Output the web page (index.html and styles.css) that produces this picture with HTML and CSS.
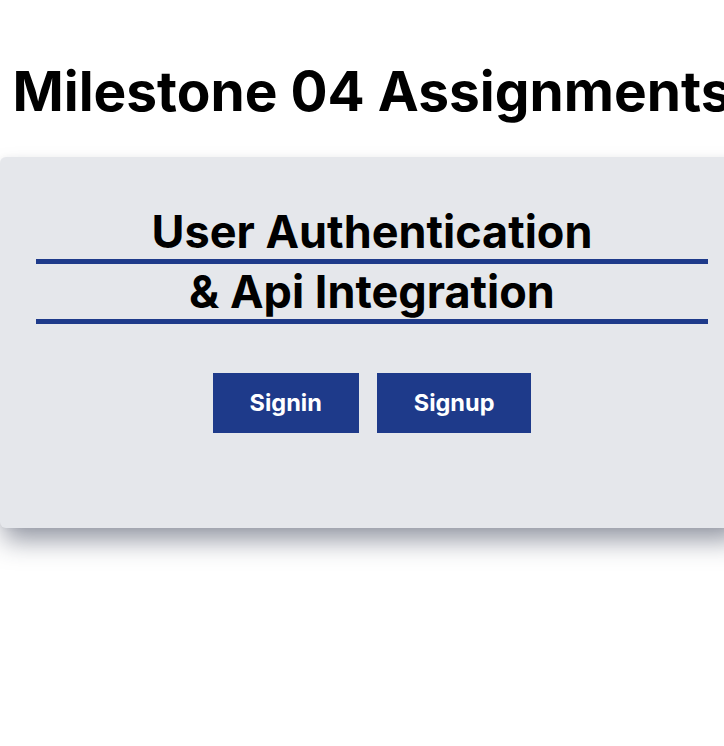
FILE: index.html
```html
<!DOCTYPE html>
<html lang="en">
<head>
<meta charset="utf-8">
<title>Milestone 04 Assignments</title>
<link rel="stylesheet" href="styles.css">
</head>
<body>
<main class="page">
  <h1 class="page-title">Milestone 04 Assignments</h1>
  <section class="card">
    <h2 class="card-title">
      <span class="card-title-line">User Authentication</span>
      <span class="card-title-line">&amp; Api Integration</span>
    </h2>
    <div class="actions">
      <button class="btn btn-signin" type="button">Signin</button>
      <button class="btn btn-signup" type="button">Signup</button>
    </div>
  </section>
</main>
</body>
</html>
```

FILE: styles.css
```css
* {
  box-sizing: border-box;
}

html {
  overflow: hidden;
}

html, body {
  margin: 0;
  padding: 0;
  background: #ffffff;
}

body {
  font-family: Inter, "Noto Sans", sans-serif;
  color: #000000;
}

.page {
  width: 744px;
  padding-top: 58px;
  padding-bottom: 80px;
}

.page-title {
  margin: 0;
  text-align: center;
  font-size: 55px;
  line-height: 66px;
  font-weight: 700;
  white-space: nowrap;
}

.card {
  margin-top: 33px;
  width: 744px;
  background: #e5e7eb;
  border-radius: 6px;
  padding: 47px 36px 95px;
  box-shadow: 0 16px 26px -4px rgba(40, 48, 72, 0.5), 0 0 6px rgba(0, 0, 0, 0.04);
}

.card-title {
  margin: 0;
  font-size: 45px;
  font-weight: 700;
  line-height: 55px;
  text-align: center;
}

.card-title-line {
  display: block;
  border-bottom: 5px solid #1e3a8a;
}

.actions {
  display: flex;
  justify-content: center;
  gap: 18px;
  margin-top: 49px;
}

.btn {
  font-family: Inter, "Noto Sans", sans-serif;
  font-size: 23.5px;
  font-weight: 700;
  line-height: 28px;
  color: #ffffff;
  background: #1e3a8a;
  border: none;
  border-radius: 0;
  padding: 16px 37px;
  cursor: pointer;
}
```
